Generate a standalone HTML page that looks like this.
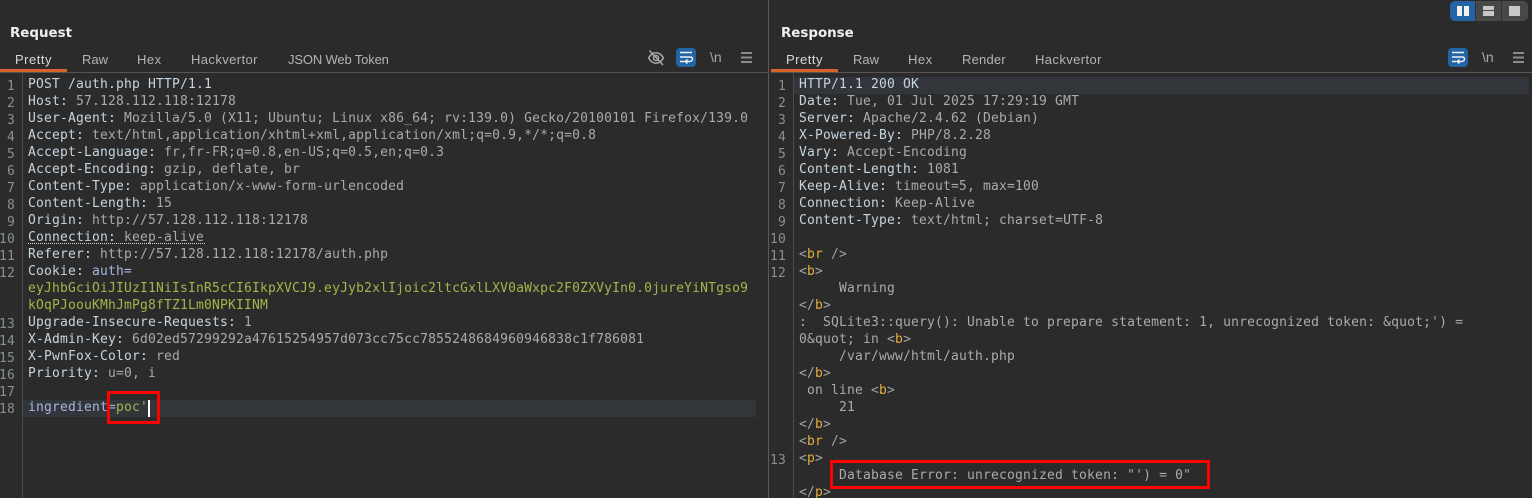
<!DOCTYPE html>
<html><head><meta charset="utf-8"><style>
html,body{margin:0;padding:0;background:#2b2b2b;width:1532px;height:498px;overflow:hidden}
body{position:relative}
.a{position:absolute}
.ui{font-family:"Liberation Sans",sans-serif;font-size:13px;color:#b4b4b4;white-space:pre;letter-spacing:.2px}
.h{font-family:"DejaVu Sans",sans-serif;font-weight:700;font-size:13.4px;color:#f0f0f0;white-space:pre}
.r,.n{position:absolute;font-family:"DejaVu Sans Mono",monospace;font-size:13px;letter-spacing:.175px;line-height:17px;white-space:pre;height:17px}
.r{color:#aaaaaa}
.n{color:#87918f}
.k{color:#c6d4df}
.b{color:#a8b5e0}
.g{color:#a3b54a}
.o{color:#e3ae3e}
.t{color:#a4a4a4}
</style></head><body>
<!-- dividers -->
<div class="a" style="left:768px;top:0;width:1px;height:498px;background:#5a5a5a"></div>
<div class="a" style="left:0;top:72px;width:768px;height:1px;background:#555"></div>
<div class="a" style="left:771px;top:72px;width:761px;height:1px;background:#555"></div>
<div class="a" style="left:22px;top:73px;width:1px;height:425px;background:#4d4d4d"></div>
<div class="a" style="left:793px;top:73px;width:1px;height:425px;background:#4d4d4d"></div>
<div class="a" style="left:0;top:69px;width:67px;height:3px;background:#d9642b"></div>
<div class="a" style="left:771px;top:69px;width:67px;height:3px;background:#d9642b"></div>
<div class="a" style="left:23px;top:400px;width:733px;height:17px;background:#32363a"></div>
<div class="a" style="left:794px;top:77px;width:735px;height:17px;background:#32363a"></div>

<!-- view toggle -->
<div class="a" style="left:1450px;top:1px;width:78px;height:20px;border-radius:5px;background:#484848;overflow:hidden">
<div class="a" style="left:0;top:0;width:25px;height:20px;background:#2364a6"></div>
<div class="a" style="left:25px;top:0;width:1px;height:20px;background:#333"></div>
<div class="a" style="left:51px;top:0;width:1px;height:20px;background:#333"></div>
<div class="a" style="left:7px;top:5px;width:5px;height:10px;background:#f2f2f2"></div>
<div class="a" style="left:14px;top:5px;width:5px;height:10px;background:#f2f2f2"></div>
<div class="a" style="left:33px;top:5px;width:11px;height:4px;background:#c8c8c8"></div>
<div class="a" style="left:33px;top:10px;width:11px;height:5px;background:#c8c8c8"></div>
<div class="a" style="left:59px;top:5px;width:11px;height:10px;background:#c8c8c8"></div>
</div>

<!-- headers -->
<div class="a h" style="left:10px;top:26px">Request</div>
<div class="a h" style="left:781px;top:26px">Response</div>

<!-- tabs -->
<div class="a ui" style="left:15px;top:52px;color:#d8d8d8;letter-spacing:.5px">Pretty</div>
<div class="a ui" style="left:82px;top:52px;letter-spacing:0">Raw</div>
<div class="a ui" style="left:137px;top:52px;letter-spacing:.5px">Hex</div>
<div class="a ui" style="left:191px;top:52px;letter-spacing:.4px">Hackvertor</div>
<div class="a ui" style="left:288px;top:52px;letter-spacing:-.15px">JSON Web Token</div>
<div class="a ui" style="left:786px;top:52px;color:#d8d8d8;letter-spacing:.5px">Pretty</div>
<div class="a ui" style="left:853px;top:52px;letter-spacing:0">Raw</div>
<div class="a ui" style="left:908px;top:52px;letter-spacing:.5px">Hex</div>
<div class="a ui" style="left:962px;top:52px">Render</div>
<div class="a ui" style="left:1035px;top:52px;letter-spacing:.4px">Hackvertor</div>

<!-- icons left -->
<svg class="a" style="left:647px;top:49px" width="18" height="18" viewBox="0 0 18 18" fill="none" stroke="#a8a8a8" stroke-width="1.5"><path d="M1.5 9C4 5 6.500 3.800 9 3.800S14 5 16.500 9C14 13 11.500 14.200 9 14.200S4 13 1.500 9Z"/><circle cx="9" cy="9" r="2.500"/><path d="M2.500 1.500L16 16"/></svg>
<svg class="a" style="left:676px;top:48px" width="20" height="19" viewBox="0 0 20 19"><rect width="20" height="19" rx="4" fill="#2364a6"/><path d="M4 4.500H16M4 9H14Q16.500 9 16.500 11T14 13.500H9.500M11.500 11.500L9 13.500L11.500 15.500M4 13.500H8" fill="none" stroke="#f2f2f2" stroke-width="1.400"/></svg>
<div class="a ui" style="left:710px;top:49px;color:#a8a8a8;letter-spacing:0;font-size:14px">\n</div>
<svg class="a" style="left:741px;top:52px" width="12" height="11"><path d="M0 1H11M0 5.500H11M0 10H11" stroke="#8c8c8c" stroke-width="2"/></svg>
<!-- icons right -->
<svg class="a" style="left:1448px;top:48px" width="20" height="19" viewBox="0 0 20 19"><rect width="20" height="19" rx="4" fill="#2364a6"/><path d="M4 4.500H16M4 9H14Q16.500 9 16.500 11T14 13.500H9.500M11.500 11.500L9 13.500L11.500 15.500M4 13.500H8" fill="none" stroke="#f2f2f2" stroke-width="1.400"/></svg>
<div class="a ui" style="left:1482px;top:49px;color:#a8a8a8;letter-spacing:0;font-size:14px">\n</div>
<svg class="a" style="left:1513px;top:52px" width="12" height="11"><path d="M0 1H11M0 5.500H11M0 10H11" stroke="#8c8c8c" stroke-width="2"/></svg>

<!-- request numbers -->
<div class="n" style="left:7px;top:78px">1</div>
<div class="n" style="left:7px;top:95px">2</div>
<div class="n" style="left:7px;top:112px">3</div>
<div class="n" style="left:7px;top:129px">4</div>
<div class="n" style="left:7px;top:146px">5</div>
<div class="n" style="left:7px;top:163px">6</div>
<div class="n" style="left:7px;top:180px">7</div>
<div class="n" style="left:7px;top:197px">8</div>
<div class="n" style="left:7px;top:214px">9</div>
<div class="n" style="left:-1px;top:231px">10</div>
<div class="n" style="left:-1px;top:248px">11</div>
<div class="n" style="left:-1px;top:265px">12</div>
<div class="n" style="left:-1px;top:316px">13</div>
<div class="n" style="left:-1px;top:333px">14</div>
<div class="n" style="left:-1px;top:350px">15</div>
<div class="n" style="left:-1px;top:367px">16</div>
<div class="n" style="left:-1px;top:384px">17</div>
<div class="n" style="left:-1px;top:401px">18</div>

<!-- request text -->
<div class="r k" style="left:28px;top:76px">POST /auth.php HTTP/1.1</div>
<div class="r" style="left:28px;top:93px"><span class="k">Host:</span> 57.128.112.118:12178</div>
<div class="r" style="left:28px;top:110px"><span class="k">User-Agent:</span> Mozilla/5.0 (X11; Ubuntu; Linux x86_64; rv:139.0) Gecko/20100101 Firefox/139.0</div>
<div class="r" style="left:28px;top:127px"><span class="k">Accept:</span> text/html,application/xhtml+xml,application/xml;q=0.9,*/*;q=0.8</div>
<div class="r" style="left:28px;top:144px"><span class="k">Accept-Language:</span> fr,fr-FR;q=0.8,en-US;q=0.5,en;q=0.3</div>
<div class="r" style="left:28px;top:161px"><span class="k">Accept-Encoding:</span> gzip, deflate, br</div>
<div class="r" style="left:28px;top:178px"><span class="k">Content-Type:</span> application/x-www-form-urlencoded</div>
<div class="r" style="left:28px;top:195px"><span class="k">Content-Length:</span> 15</div>
<div class="r" style="left:28px;top:212px"><span class="k">Origin:</span> http://57.128.112.118:12178</div>
<div class="r" style="left:28px;top:229px"><span class="k">Connection:</span> keep-alive</div>
<div class="a" style="left:28px;top:243px;width:177px;border-top:1px dotted #cfdde8"></div>
<div class="r" style="left:28px;top:246px"><span class="k">Referer:</span> http://57.128.112.118:12178/auth.php</div>
<div class="r" style="left:28px;top:263px"><span class="k">Cookie:</span> <span class="b">auth=</span></div>
<div class="r g" style="left:28px;top:280px">eyJhbGciOiJIUzI1NiIsInR5cCI6IkpXVCJ9.eyJyb2xlIjoic2ltcGxlLXV0aWxpc2F0ZXVyIn0.0jureYiNTgso9</div>
<div class="r g" style="left:28px;top:297px">kOqPJoouKMhJmPg8fTZ1Lm0NPKIINM</div>
<div class="r" style="left:28px;top:314px"><span class="k">Upgrade-Insecure-Requests:</span> 1</div>
<div class="r" style="left:28px;top:331px"><span class="k">X-Admin-Key:</span> 6d02ed57299292a47615254957d073cc75cc7855248684960946838c1f786081</div>
<div class="r" style="left:28px;top:348px"><span class="k">X-PwnFox-Color:</span> red</div>
<div class="r" style="left:28px;top:365px"><span class="k">Priority:</span> u=0, i</div>
<div class="r" style="left:28px;top:399px"><span class="b">ingredient=</span><span class="g">poc'</span></div>
<div class="a" style="left:148px;top:400px;width:2px;height:17px;background:#fff"></div>
<div class="a" style="left:107px;top:391px;width:47px;height:27px;border:3px solid #f00"></div>

<!-- response numbers -->
<div class="n" style="left:778px;top:78px">1</div>
<div class="n" style="left:778px;top:95px">2</div>
<div class="n" style="left:778px;top:112px">3</div>
<div class="n" style="left:778px;top:129px">4</div>
<div class="n" style="left:778px;top:146px">5</div>
<div class="n" style="left:778px;top:163px">6</div>
<div class="n" style="left:778px;top:180px">7</div>
<div class="n" style="left:778px;top:197px">8</div>
<div class="n" style="left:778px;top:214px">9</div>
<div class="n" style="left:770px;top:231px">10</div>
<div class="n" style="left:770px;top:248px">11</div>
<div class="n" style="left:770px;top:265px">12</div>
<div class="n" style="left:770px;top:452px">13</div>

<!-- response text -->
<div class="r k" style="left:799px;top:76px">HTTP/1.1 200 OK</div>
<div class="r" style="left:799px;top:93px"><span class="k">Date:</span> Tue, 01 Jul 2025 17:29:19 GMT</div>
<div class="r" style="left:799px;top:110px"><span class="k">Server:</span> Apache/2.4.62 (Debian)</div>
<div class="r" style="left:799px;top:127px"><span class="k">X-Powered-By:</span> PHP/8.2.28</div>
<div class="r" style="left:799px;top:144px"><span class="k">Vary:</span> Accept-Encoding</div>
<div class="r" style="left:799px;top:161px"><span class="k">Content-Length:</span> 1081</div>
<div class="r" style="left:799px;top:178px"><span class="k">Keep-Alive:</span> timeout=5, max=100</div>
<div class="r" style="left:799px;top:195px"><span class="k">Connection:</span> Keep-Alive</div>
<div class="r" style="left:799px;top:212px"><span class="k">Content-Type:</span> text/html; charset=UTF-8</div>
<div class="r" style="left:799px;top:246px"><span class="t">&lt;</span><span class="o">br</span><span class="t"> /&gt;</span></div>
<div class="r" style="left:799px;top:263px"><span class="t">&lt;</span><span class="o">b</span><span class="t">&gt;</span></div>
<div class="r" style="left:799px;top:280px">     Warning</div>
<div class="r" style="left:799px;top:297px"><span class="t">&lt;/</span><span class="o">b</span><span class="t">&gt;</span></div>
<div class="r" style="left:799px;top:314px">:  SQLite3::query(): Unable to prepare statement: 1, unrecognized token: &amp;quot;') =</div>
<div class="r" style="left:799px;top:331px">0&amp;quot; in <span class="t">&lt;</span><span class="o">b</span><span class="t">&gt;</span></div>
<div class="r" style="left:799px;top:348px">     /var/www/html/auth.php</div>
<div class="r" style="left:799px;top:365px"><span class="t">&lt;/</span><span class="o">b</span><span class="t">&gt;</span></div>
<div class="r" style="left:799px;top:382px"> on line <span class="t">&lt;</span><span class="o">b</span><span class="t">&gt;</span></div>
<div class="r" style="left:799px;top:399px">     21</div>
<div class="r" style="left:799px;top:416px"><span class="t">&lt;/</span><span class="o">b</span><span class="t">&gt;</span></div>
<div class="r" style="left:799px;top:433px"><span class="t">&lt;</span><span class="o">br</span><span class="t"> /&gt;</span></div>
<div class="r" style="left:799px;top:450px"><span class="t">&lt;</span><span class="o">p</span><span class="t">&gt;</span></div>
<div class="r" style="left:799px;top:467px">     Database Error: unrecognized token: "') = 0"</div>
<div class="r" style="left:799px;top:484px"><span class="t">&lt;/</span><span class="o">p</span><span class="t">&gt;</span></div>
<div class="a" style="left:830px;top:460px;width:374px;height:23px;border:3px solid #f00"></div>
</body></html>
